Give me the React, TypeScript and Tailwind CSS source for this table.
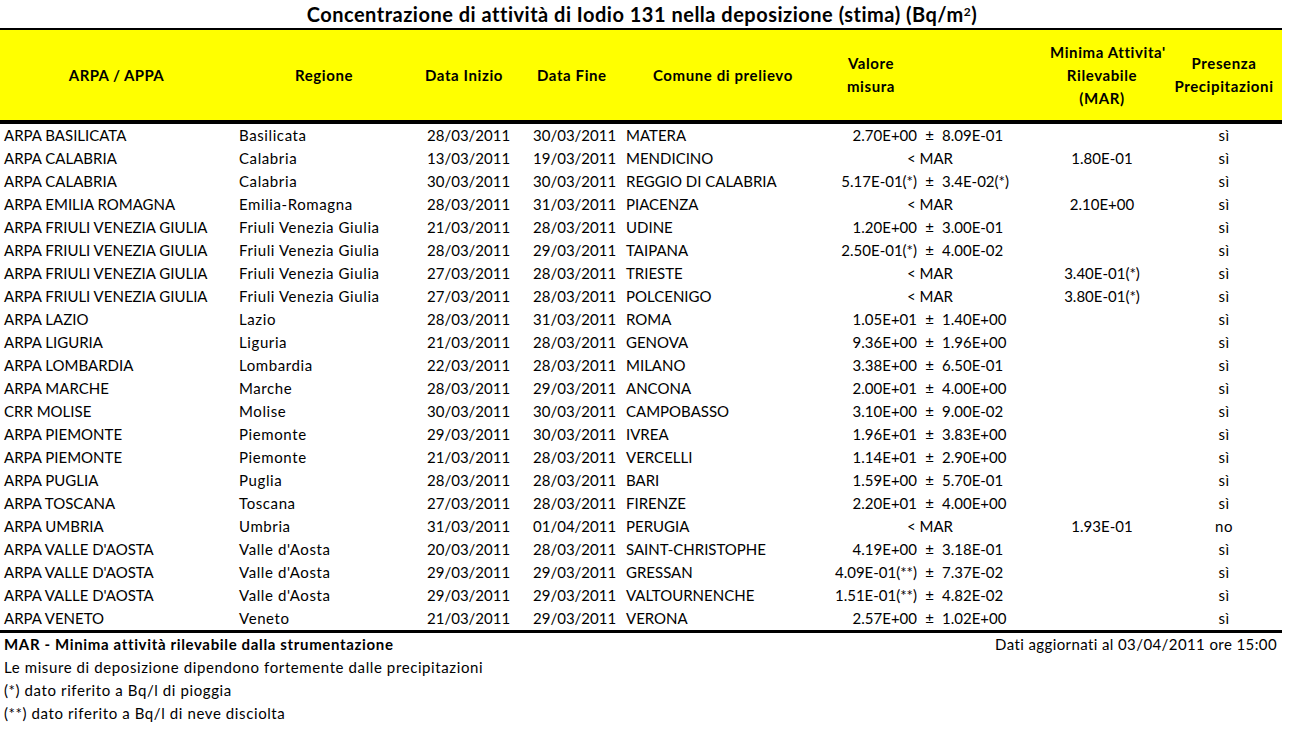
import React from "react";

type Row = {
  a: string;
  r: string;
  di: string;
  df: string;
  c: string;
  v?: string;
  e?: string;
  mar?: string;
  p: string;
};

const rows: Row[] = [
  { a: "ARPA BASILICATA", r: "Basilicata", di: "28/03/2011", df: "30/03/2011", c: "MATERA", v: "2.70E+00", e: "8.09E-01", p: "sì" },
  { a: "ARPA CALABRIA", r: "Calabria", di: "13/03/2011", df: "19/03/2011", c: "MENDICINO", mar: "1.80E-01", p: "sì" },
  { a: "ARPA CALABRIA", r: "Calabria", di: "30/03/2011", df: "30/03/2011", c: "REGGIO DI CALABRIA", v: "5.17E-01(*)", e: "3.4E-02(*)", p: "sì" },
  { a: "ARPA EMILIA ROMAGNA", r: "Emilia-Romagna", di: "28/03/2011", df: "31/03/2011", c: "PIACENZA", mar: "2.10E+00", p: "sì" },
  { a: "ARPA FRIULI VENEZIA GIULIA", r: "Friuli Venezia Giulia", di: "21/03/2011", df: "28/03/2011", c: "UDINE", v: "1.20E+00", e: "3.00E-01", p: "sì" },
  { a: "ARPA FRIULI VENEZIA GIULIA", r: "Friuli Venezia Giulia", di: "28/03/2011", df: "29/03/2011", c: "TAIPANA", v: "2.50E-01(*)", e: "4.00E-02", p: "sì" },
  { a: "ARPA FRIULI VENEZIA GIULIA", r: "Friuli Venezia Giulia", di: "27/03/2011", df: "28/03/2011", c: "TRIESTE", mar: "3.40E-01(*)", p: "sì" },
  { a: "ARPA FRIULI VENEZIA GIULIA", r: "Friuli Venezia Giulia", di: "27/03/2011", df: "28/03/2011", c: "POLCENIGO", mar: "3.80E-01(*)", p: "sì" },
  { a: "ARPA LAZIO", r: "Lazio", di: "28/03/2011", df: "31/03/2011", c: "ROMA", v: "1.05E+01", e: "1.40E+00", p: "sì" },
  { a: "ARPA LIGURIA", r: "Liguria", di: "21/03/2011", df: "28/03/2011", c: "GENOVA", v: "9.36E+00", e: "1.96E+00", p: "sì" },
  { a: "ARPA LOMBARDIA", r: "Lombardia", di: "22/03/2011", df: "28/03/2011", c: "MILANO", v: "3.38E+00", e: "6.50E-01", p: "sì" },
  { a: "ARPA MARCHE", r: "Marche", di: "28/03/2011", df: "29/03/2011", c: "ANCONA", v: "2.00E+01", e: "4.00E+00", p: "sì" },
  { a: "CRR MOLISE", r: "Molise", di: "30/03/2011", df: "30/03/2011", c: "CAMPOBASSO", v: "3.10E+00", e: "9.00E-02", p: "sì" },
  { a: "ARPA PIEMONTE", r: "Piemonte", di: "29/03/2011", df: "30/03/2011", c: "IVREA", v: "1.96E+01", e: "3.83E+00", p: "sì" },
  { a: "ARPA PIEMONTE", r: "Piemonte", di: "21/03/2011", df: "28/03/2011", c: "VERCELLI", v: "1.14E+01", e: "2.90E+00", p: "sì" },
  { a: "ARPA PUGLIA", r: "Puglia", di: "28/03/2011", df: "28/03/2011", c: "BARI", v: "1.59E+00", e: "5.70E-01", p: "sì" },
  { a: "ARPA TOSCANA", r: "Toscana", di: "27/03/2011", df: "28/03/2011", c: "FIRENZE", v: "2.20E+01", e: "4.00E+00", p: "sì" },
  { a: "ARPA UMBRIA", r: "Umbria", di: "31/03/2011", df: "01/04/2011", c: "PERUGIA", mar: "1.93E-01", p: "no" },
  { a: "ARPA VALLE D'AOSTA", r: "Valle d'Aosta", di: "20/03/2011", df: "28/03/2011", c: "SAINT-CHRISTOPHE", v: "4.19E+00", e: "3.18E-01", p: "sì" },
  { a: "ARPA VALLE D'AOSTA", r: "Valle d'Aosta", di: "29/03/2011", df: "29/03/2011", c: "GRESSAN", v: "4.09E-01(**)", e: "7.37E-02", p: "sì" },
  { a: "ARPA VALLE D'AOSTA", r: "Valle d'Aosta", di: "29/03/2011", df: "29/03/2011", c: "VALTOURNENCHE", v: "1.51E-01(**)", e: "4.82E-02", p: "sì" },
  { a: "ARPA VENETO", r: "Veneto", di: "21/03/2011", df: "29/03/2011", c: "VERONA", v: "2.57E+00", e: "1.02E+00", p: "sì" },
];

const cols = "grid grid-cols-[235px_186px_108px_93px_188px_240px_104px_128px]";

export default function App() {
  return (
    <div
      className="w-[1289px] h-[744px] bg-white text-black text-[15px] leading-[23px]"
      style={{ fontFamily: "Lato, 'Open Sans', sans-serif" }}
    >
      <div className="w-[1282px]">
        <div className="h-[28px] flex items-center justify-center font-bold text-[20px] tracking-[0.5px] pl-[2px] whitespace-nowrap">
          Concentrazione di attività di Iodio 131 nella deposizione (stima) (Bq/m
          <sup className="text-[12px] relative -top-[2px]">2</sup>)
        </div>
        <div className="border-t-[2px] border-b-[4px] border-black">
          <div className={`${cols} h-[90px] bg-[#ffff00] font-bold items-center tracking-[0.6px] whitespace-nowrap`}>
            <div className="text-center pr-[2px] tracking-[0.4px]">ARPA / APPA</div>
            <div className="pl-[60px]">Regione</div>
            <div className="pl-[4px]">Data Inizio</div>
            <div className="pl-[8px]">Data Fine</div>
            <div className="pl-[31px]">Comune di prelievo</div>
            <div className="w-[122px] text-center">
              <div>Valore</div>
              <div>misura</div>
            </div>
            <div className="text-center">
              <div>Minima Attivita'</div>
              <div>Rilevabile</div>
              <div>(MAR)</div>
            </div>
            <div className="text-center pl-[12px]">
              <div>Presenza</div>
              <div>Precipitazioni</div>
            </div>
          </div>
        </div>
        <div className="border-b-[3px] border-black">
          {rows.map((row, i) => (
            <div key={i} className={`${cols} h-[23px] whitespace-nowrap`}>
              <div className="pl-[4px]">{row.a}</div>
              <div className="pl-[4px] tracking-[0.6px]">{row.r}</div>
              <div className="pl-[6px]">{row.di}</div>
              <div className="pl-[4px]">{row.df}</div>
              <div className="pl-[4px]">{row.c}</div>
              {row.v ? (
                <div className="grid grid-cols-[107px_25px_1fr]">
                  <div className="text-right">{row.v}</div>
                  <div className="text-center">±</div>
                  <div>{row.e}</div>
                </div>
              ) : (
                <div className="w-[240px] text-center">&lt; MAR</div>
              )}
              <div className="text-center">{row.mar ?? ""}</div>
              <div className="text-center pl-[12px] tracking-[0.5px]">{row.p}</div>
            </div>
          ))}
        </div>
        <div className="flex justify-between whitespace-nowrap">
          <div className="pl-[4px] font-bold tracking-[0.65px]">MAR - Minima attività rilevabile dalla strumentazione</div>
          <div className="pr-[5px] tracking-[0.4px]">Dati aggiornati al 03/04/2011 ore 15:00</div>
        </div>
        <div className="pl-[4px] tracking-[0.6px]">Le misure di deposizione dipendono fortemente dalle precipitazioni</div>
        <div className="pl-[4px] tracking-[0.6px]">(*) dato riferito a Bq/l di pioggia</div>
        <div className="pl-[4px] tracking-[0.6px]">(**) dato riferito a Bq/l di neve disciolta</div>
      </div>
    </div>
  );
}
